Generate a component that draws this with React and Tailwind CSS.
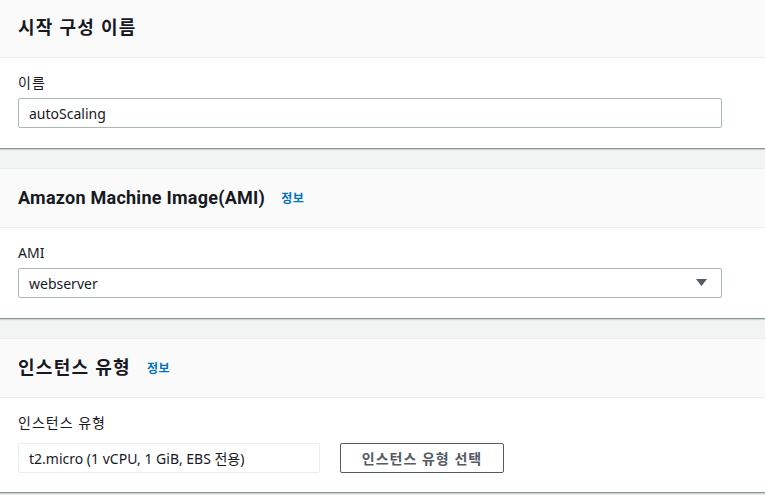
import React from "react";

const font = {
  fontFamily: '"Noto Sans", "Noto Sans CJK KR", sans-serif',
};

const titleFont = {
  fontFamily: 'Roboto, "Noto Sans CJK KR", sans-serif',
};

function Info() {
  return <span className="ml-4 mt-[2px] text-[12px] font-bold text-[#0073bb] tracking-[0.5px]">정보</span>;
}

function Card({ title, info, children, first, ko }) {
  return (
    <section
      className={
        "bg-white border-t border-[#eaeded] border-b border-b-[#879596] shadow-[0_1px_1px_0_rgba(0,28,36,0.15)] " +
        (first ? "-mt-[2px]" : "")
      }
    >
      <div className="h-[59px] bg-[#fafafa] border-b border-[#eaeded] px-[18px] flex items-center">
        <h2
          style={titleFont}
          className={"text-[18px] font-bold text-[#16191f] leading-none " + (ko ? "tracking-[1.3px]" : "tracking-[0.25px]")}
        >
          {title}
        </h2>
        {info && <Info />}
      </div>
      <div className="px-[18px] pt-[14px] pb-[19px]">{children}</div>
    </section>
  );
}

export default function App() {
  return (
    <div style={font} className="w-[765px] h-[495px] overflow-hidden bg-[#f2f3f3] flex flex-col gap-[19px]">
      <Card title="시작 구성 이름" first ko>
        <div className="text-[14px] leading-[22px] text-[#16191f] tracking-[1px]">이름</div>
        <div className="mt-[4px] mb-[1px] w-[704px] h-[30px] border border-[#aab7b8] rounded-[2px] px-[10px] flex items-center text-[14px] text-[#16191f]">
          autoScaling
        </div>
      </Card>
      <Card title="Amazon Machine Image(AMI)" info>
        <div className="text-[14px] leading-[22px] text-[#16191f]">AMI</div>
        <div className="mt-[4px] mb-[1px] w-[704px] h-[30px] border border-[#aab7b8] rounded-[2px] pl-[10px] pr-[14px] flex items-center justify-between text-[14px] text-[#16191f]">
          <span>webserver</span>
          <svg width="11" height="8" viewBox="0 0 11 8">
            <path d="M0 0 H11 L5.5 7 Z" fill="#545b64" />
          </svg>
        </div>
      </Card>
      <Card title="인스턴스 유형" info ko>
        <div className="text-[14px] leading-[22px] text-[#16191f] tracking-[1px]">인스턴스 유형</div>
        <div className="mt-[9px] flex items-center gap-[20px]">
          <div className="w-[302px] h-[30px] border border-[#eaeded] rounded-[2px] px-[10px] flex items-center text-[14px] text-[#16191f]">
            t2.micro (1 vCPU, 1 GiB, EBS 전용)
          </div>
          <button className="w-[164px] h-[30px] border border-[#545b64] rounded-[2px] text-[14px] font-bold text-[#545b64] bg-white tracking-[1px]">
            인스턴스 유형 선택
          </button>
        </div>
      </Card>
    </div>
  );
}
